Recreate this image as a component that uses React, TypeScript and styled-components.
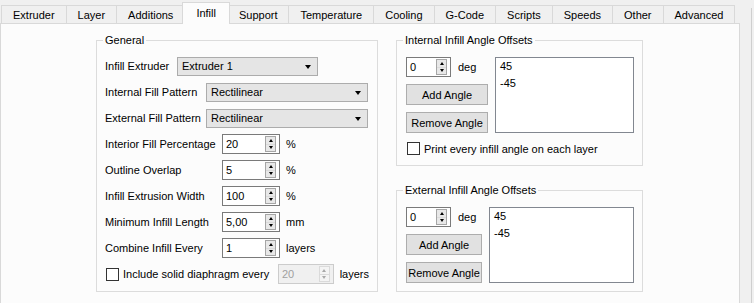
import React from 'react';
import styled, { createGlobalStyle } from 'styled-components';

const GlobalStyle = createGlobalStyle`
  html, body {
    margin: 0;
    padding: 0;
    background: #f0f0f0;
  }

  body {
    font-family: "Liberation Sans", Arial, sans-serif;
    font-size: 11px;
    color: #000;
  }

  * {
    box-sizing: border-box;
  }
`;

const Window = styled.div`
  display: flex;
  width: 754px;
  height: 303px;
  overflow: hidden;
  background: #f0f0f0;
`;

const Main = styled.div`
  width: 740px;
  display: flex;
  flex-direction: column;
`;

const SideStrip = styled.div`
  width: 12px;
  margin-top: 8px;
  border-right: 1px solid #cfcfcf;
`;

const TabBar = styled.div`
  display: flex;
  align-items: flex-end;
  height: 23px;
  padding-left: 1px;
  position: relative;
  z-index: 1;
`;

const Tab = styled.div<{ $active?: boolean }>`
  display: flex;
  align-items: center;
  justify-content: center;
  height: ${({ $active }) => ($active ? 22 : 18)}px;
  margin: ${({ $active }) => ($active ? '0 -3px -1px -2px' : '0 -1px 0 0')};
  padding: ${({ $active }) => ($active ? '0 13px 2px' : '0 11px')};
  border: 1px solid #d9d9d9;
  border-bottom: none;
  background: ${({ $active }) => ($active ? '#fcfcfc' : '#f0f0f0')};
  position: relative;
  z-index: ${({ $active }) => ($active ? 2 : 1)};
  white-space: nowrap;
`;

const Pane = styled.div`
  flex: 1;
  display: flex;
  align-items: flex-start;
  gap: 18px;
  padding: 10px 0 0 95px;
  background: #fcfcfc;
  border: 1px solid #d9d9d9;
  border-bottom: none;
`;

const Group = styled.fieldset<{ $width: number }>`
  margin: 0;
  padding: 0;
  min-width: 0;
  width: ${({ $width }) => $width}px;
  border: 1px solid #dcdcdc;
`;

const Legend = styled.legend`
  margin-left: 6px;
  padding: 0 2px;
  line-height: 13px;
`;

const GeneralBody = styled.div`
  display: flex;
  flex-direction: column;
  gap: 6px;
  padding: 9px 8px 7px 8px;
`;

const AngleBody = styled.div<{ $bottom: number }>`
  display: flex;
  flex-direction: column;
  gap: 9px;
  padding: 10px 8px ${({ $bottom }) => $bottom}px 9px;
`;

const RightColumn = styled.div`
  display: flex;
  flex-direction: column;
  gap: 18px;
`;

const Row = styled.div`
  display: flex;
  align-items: center;
  gap: 6px;
  height: 20px;
`;

const Label = styled.span<{ $w: number }>`
  width: ${({ $w }) => $w}px;
  flex-shrink: 0;
  white-space: nowrap;
`;

const Combo = styled.div<{ $w: number }>`
  position: relative;
  display: flex;
  align-items: center;
  width: ${({ $w }) => $w}px;
  height: 19px;
  padding-left: 4px;
  background: #e5e5e5;
  border: 1px solid #acacac;

  &::after {
    content: '';
    position: absolute;
    right: 6px;
    top: 7px;
    border-style: solid;
    border-width: 4px 3.5px 0 3.5px;
    border-color: #000 transparent transparent transparent;
  }
`;

const SpinBox = styled.div<{ $w: number; $disabled?: boolean }>`
  display: flex;
  width: ${({ $w }) => $w}px;
  height: 20px;
  border: 1px solid ${({ $disabled }) => ($disabled ? '#cccccc' : '#7a7a7a')};
  background: ${({ $disabled }) => ($disabled ? '#f0f0f0' : '#ffffff')};
  color: ${({ $disabled }) => ($disabled ? '#a0a0a0' : '#000')};
`;

const SpinValue = styled.span`
  flex: 1;
  display: flex;
  align-items: center;
  padding-left: 3px;
`;

const SpinButtons = styled.div<{ $disabled?: boolean }>`
  display: flex;
  flex-direction: column;
  width: 11px;
  margin: 1px 3px 1px 0;
  border: 1px solid ${({ $disabled }) => ($disabled ? '#dadada' : '#a6a6a6')};
  background: ${({ $disabled }) => ($disabled ? '#f4f4f4' : '#e8e8e8')};
`;

const SpinArrow = styled.span<{ $down?: boolean; $disabled?: boolean }>`
  flex: 1;
  display: flex;
  align-items: center;
  justify-content: center;

  & + & {
    border-top: 1px solid ${({ $disabled }) => ($disabled ? '#dadada' : '#a6a6a6')};
  }

  &::after {
    content: '';
    border-style: solid;
    border-width: ${({ $down }) => ($down ? '3px 2.5px 0 2.5px' : '0 2.5px 3px 2.5px')};
    border-color: ${({ $down, $disabled }) => {
      const c = $disabled ? '#a8a8a8' : '#000';
      return $down ? `${c} transparent transparent transparent` : `transparent transparent ${c} transparent`;
    }};
  }
`;

const CheckLabel = styled.label<{ $w?: number }>`
  display: flex;
  align-items: center;
  gap: 4px;
  margin-left: 1px;
  width: ${({ $w }) => ($w ? `${$w}px` : 'auto')};
  flex-shrink: 0;
  white-space: nowrap;
`;

const CheckBox = styled.span`
  width: 13px;
  height: 13px;
  border: 1px solid #333333;
  background: #ffffff;
  flex-shrink: 0;
`;

const AngleTop = styled.div`
  display: flex;
  gap: 7px;
`;

const AngleControls = styled.div<{ $w: number }>`
  display: flex;
  flex-direction: column;
  gap: 7px;
  width: ${({ $w }) => $w}px;
  flex-shrink: 0;
`;

const SpinRow = styled.div`
  display: flex;
  align-items: center;
  gap: 7px;
`;

const Button = styled.button`
  height: 21px;
  padding: 0;
  font: inherit;
  color: #000;
  background: #e1e1e1;
  border: 1px solid #adadad;
  border-radius: 0;
`;

const AngleList = styled.div`
  flex: 1;
  height: 76px;
  padding: 0 4px;
  background: #ffffff;
  border: 1px solid #828790;
  line-height: 17px;
`;

const tabs = [
  'Extruder',
  'Layer',
  'Additions',
  'Infill',
  'Support',
  'Temperature',
  'Cooling',
  'G-Code',
  'Scripts',
  'Speeds',
  'Other',
  'Advanced',
];

const Spin: React.FC<{ value: string; width: number; disabled?: boolean }> = ({ value, width, disabled }) => (
  <SpinBox $w={width} $disabled={disabled}>
    <SpinValue>{value}</SpinValue>
    <SpinButtons $disabled={disabled}>
      <SpinArrow $disabled={disabled} />
      <SpinArrow $down $disabled={disabled} />
    </SpinButtons>
  </SpinBox>
);

const AngleGroup: React.FC<{ title: string; controlsWidth: number; bottom: number; withCheck?: boolean }> = ({
  title,
  controlsWidth,
  bottom,
  withCheck,
}) => (
  <Group $width={247}>
    <Legend>{title}</Legend>
    <AngleBody $bottom={bottom}>
      <AngleTop>
        <AngleControls $w={controlsWidth}>
          <SpinRow>
            <Spin value="0" width={45} />
            <span>deg</span>
          </SpinRow>
          <Button>Add Angle</Button>
          <Button>Remove Angle</Button>
        </AngleControls>
        <AngleList>
          <div>45</div>
          <div>-45</div>
        </AngleList>
      </AngleTop>
      {withCheck && (
        <CheckLabel>
          <CheckBox />
          Print every infill angle on each layer
        </CheckLabel>
      )}
    </AngleBody>
  </Group>
);

const numericRows = [
  { label: 'Interior Fill Percentage', value: '20', unit: '%' },
  { label: 'Outline Overlap', value: '5', unit: '%' },
  { label: 'Infill Extrusion Width', value: '100', unit: '%' },
  { label: 'Minimum Infill Length', value: '5,00', unit: 'mm' },
  { label: 'Combine Infill Every', value: '1', unit: 'layers' },
];

const App: React.FC = () => {
  return (
    <>
      <GlobalStyle />
      <Window>
        <Main>
          <TabBar>
            {tabs.map((t) => (
              <Tab key={t} $active={t === 'Infill'}>
                {t}
              </Tab>
            ))}
          </TabBar>
          <Pane>
            <Group $width={282}>
              <Legend>General</Legend>
              <GeneralBody>
                <Row>
                  <Label $w={66}>Infill Extruder</Label>
                  <Combo $w={141}>Extruder 1</Combo>
                </Row>
                <Row>
                  <Label $w={95}>Internal Fill Pattern</Label>
                  <Combo $w={162}>Rectilinear</Combo>
                </Row>
                <Row>
                  <Label $w={95}>External Fill Pattern</Label>
                  <Combo $w={162}>Rectilinear</Combo>
                </Row>
                {numericRows.map((r) => (
                  <Row key={r.label}>
                    <Label $w={111}>{r.label}</Label>
                    <Spin value={r.value} width={58} />
                    <span>{r.unit}</span>
                  </Row>
                ))}
                <Row>
                  <CheckLabel $w={166}>
                    <CheckBox />
                    Include solid diaphragm every
                  </CheckLabel>
                  <Spin value="20" width={57} disabled />
                  <span>layers</span>
                </Row>
              </GeneralBody>
            </Group>
            <RightColumn>
              <AngleGroup title="Internal Infill Angle Offsets" controlsWidth={82} bottom={10} withCheck />
              <AngleGroup title="External Infill Angle Offsets" controlsWidth={76} bottom={8} />
            </RightColumn>
          </Pane>
        </Main>
        <SideStrip />
      </Window>
    </>
  );
};

export default App;
